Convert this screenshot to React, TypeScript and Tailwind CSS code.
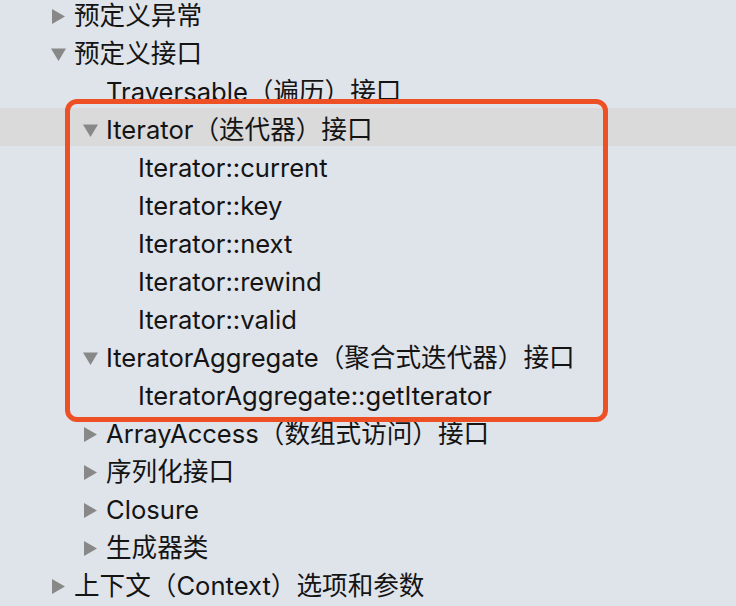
import React from 'react';

type Row = {
  label: string;
  level: number;
  arrow?: 'right' | 'down';
  selected?: boolean;
};

const rows: Row[] = [
  { label: '预定义异常', level: 0, arrow: 'right' },
  { label: '预定义接口', level: 0, arrow: 'down' },
  { label: 'Traversable（遍历）接口', level: 1 },
  { label: 'Iterator（迭代器）接口', level: 1, arrow: 'down', selected: true },
  { label: 'Iterator::current', level: 2 },
  { label: 'Iterator::key', level: 2 },
  { label: 'Iterator::next', level: 2 },
  { label: 'Iterator::rewind', level: 2 },
  { label: 'Iterator::valid', level: 2 },
  { label: 'IteratorAggregate（聚合式迭代器）接口', level: 1, arrow: 'down' },
  { label: 'IteratorAggregate::getIterator', level: 2 },
  { label: 'ArrayAccess（数组式访问）接口', level: 1, arrow: 'right' },
  { label: '序列化接口', level: 1, arrow: 'right' },
  { label: 'Closure', level: 1, arrow: 'right' },
  { label: '生成器类', level: 1, arrow: 'right' },
  { label: '上下文（Context）选项和参数', level: 0, arrow: 'right' },
];

const indent = ['pl-[51px]', 'pl-[83px]', 'pl-[115px]'];

function Arrow({ dir }: { dir?: 'right' | 'down' }) {
  if (!dir) return <span className="w-[23px] shrink-0" />;
  return (
    <span className="w-[23px] shrink-0 flex items-center">
      <svg width="15" height="15" viewBox="0 0 15 15">
        {dir === 'right' ? (
          <polygon points="1,0 14,7.5 1,15" fill="#888888" />
        ) : (
          <polygon points="0,1.5 15,1.5 7.5,14" fill="#888888" />
        )}
      </svg>
    </span>
  );
}

export default function App() {
  return (
    <div
      className="relative w-[736px] h-[606px] overflow-hidden bg-[#dfe3ea] text-[#141414]"
      style={{ fontFamily: '"Inter", "Noto Sans CJK SC", sans-serif' }}
    >
      <div className="mt-[-6px] flex flex-col">
        {rows.map((row) => (
          <div
            key={row.label}
            className={`h-[38px] pt-[6px] flex items-center whitespace-nowrap text-[25.6px] ${indent[row.level]} ${
              row.selected ? 'bg-[#dadada]' : ''
            }`}
          >
            <Arrow dir={row.arrow} />
            <span>{row.label}</span>
          </div>
        ))}
      </div>
      <div className="absolute left-[65px] top-[99px] w-[543px] h-[323px] border-[5px] border-[#ee5026] rounded-[12px]" />
    </div>
  );
}
